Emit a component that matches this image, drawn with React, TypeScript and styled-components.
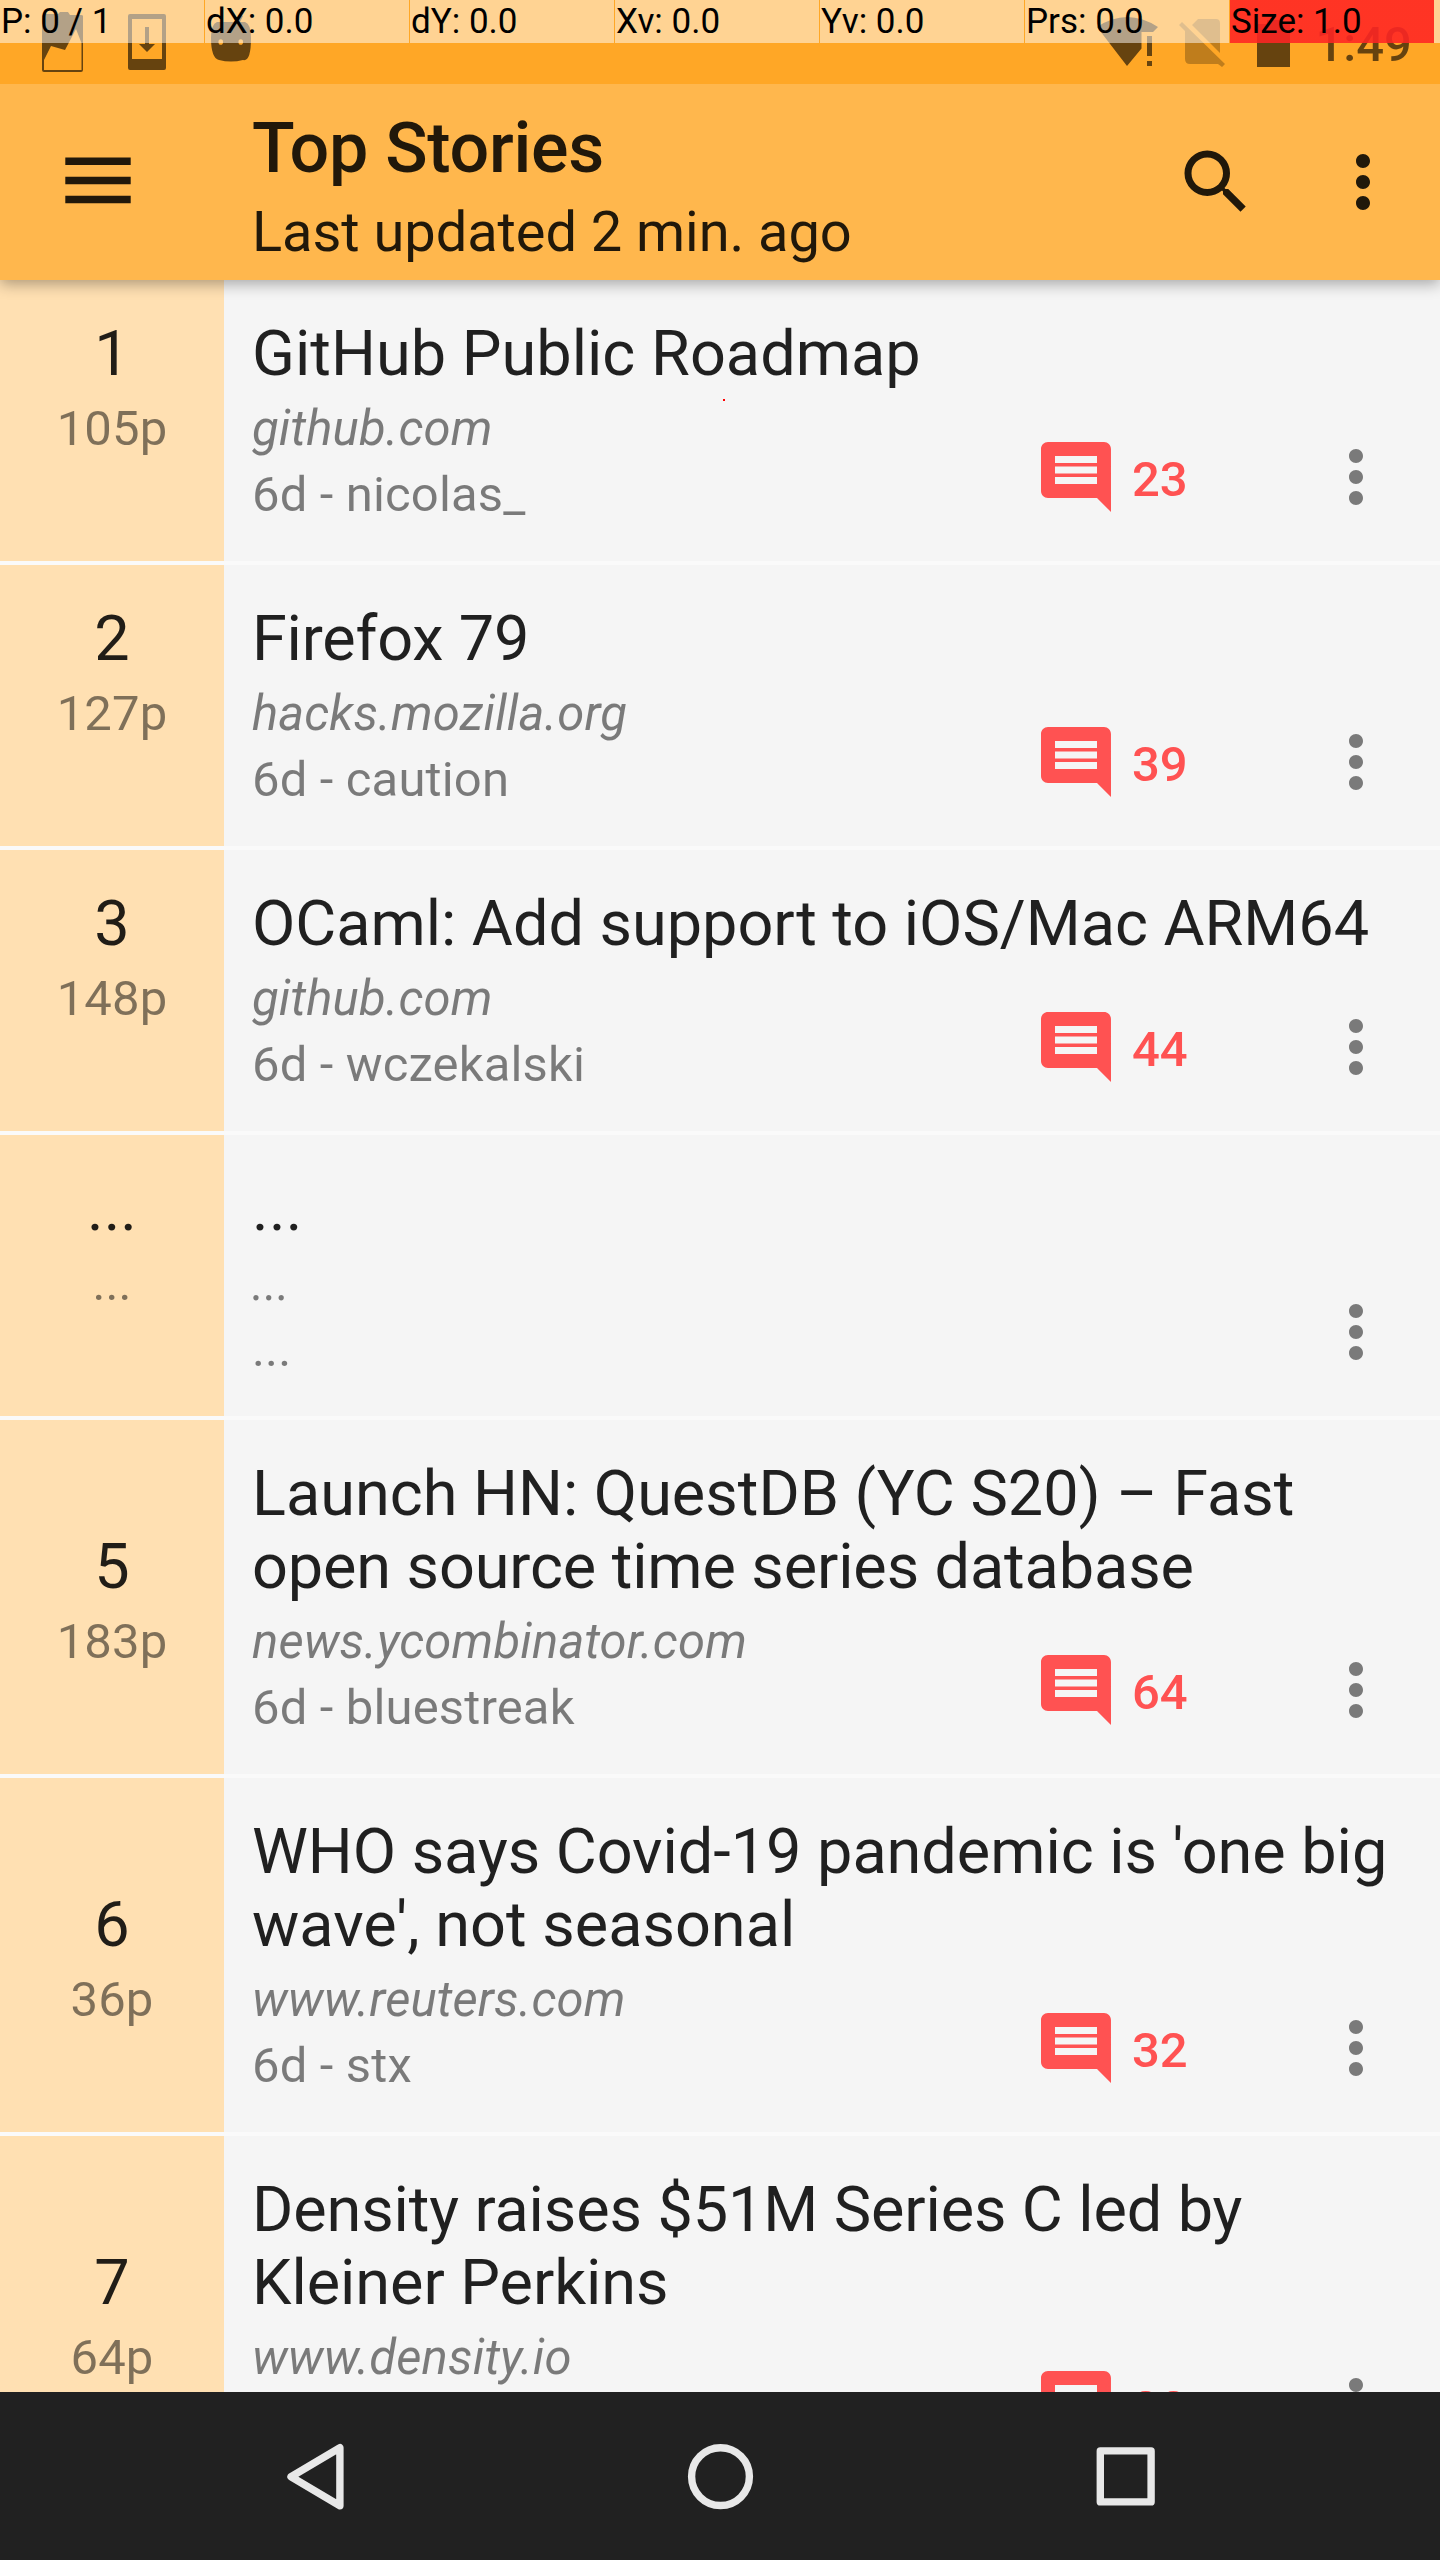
import React from 'react';
import styled, { createGlobalStyle } from 'styled-components';
import { MdComment, MdMoreVert, MdSearch } from 'react-icons/md';

const GlobalStyle = createGlobalStyle`
  body { margin: 0; background: #fafafa; }
  * { box-sizing: border-box; }
`;

const Screen = styled.div`
  position: relative;
  width: 1440px;
  height: 2560px;
  display: flex;
  flex-direction: column;
  overflow: hidden;
  font-family: Roboto, sans-serif;
  color: rgba(0, 0, 0, 0.87);
  background: #fafafa;
`;

const StatusBar = styled.div`
  flex: none;
  height: 84px;
  display: flex;
  justify-content: space-between;
  background: #ffa726;
`;

const Clock = styled.text`
  font: 500 49px Roboto, sans-serif;
`;

const Toolbar = styled.header`
  flex: none;
  height: 196px;
  display: flex;
  align-items: center;
  padding-right: 35px;
  background: #ffb74d;
  box-shadow: 0 4px 14px rgba(0, 0, 0, 0.32);
  clip-path: inset(0 0 -30px 0);
  z-index: 1;
`;

const MenuButton = styled.div`
  width: 252px;
  height: 196px;
`;

const Heading = styled.div`
  flex: 1;
  height: 196px;
  padding-top: 23px;
`;

const Title = styled.h1`
  margin: 0;
  font-size: 70px;
  font-weight: 500;
  line-height: 82px;
  letter-spacing: -0.28px;
`;

const Subtitle = styled.div`
  margin-top: 10px;
  font-size: 56px;
  line-height: 66px;
  letter-spacing: -0.06px;
`;

const Actions = styled.div`
  display: flex;
  gap: 63px;
`;

const List = styled.main`
  flex: 1;
  min-height: 0;
  overflow: hidden;
  display: flex;
  flex-direction: column;
  gap: 4px;
`;

const Row = styled.article`
  flex: none;
  display: flex;
  background: #f5f5f5;
`;

const Rank = styled.div`
  width: 224px;
  display: flex;
  flex-direction: column;
  justify-content: flex-end;
  align-items: center;
  padding-bottom: 104px;
  background: #ffe0b2;
`;

const Large = styled.div`
  font-size: 63px;
  line-height: 73px;
`;

const Small = styled.div<{ $italic?: boolean; $gap: number }>`
  margin-top: ${(p) => p.$gap}px;
  font-size: 49px;
  line-height: 57px;
  letter-spacing: 0.15px;
  font-style: ${(p) => (p.$italic ? 'italic' : 'normal')};
  color: rgba(0, 0, 0, 0.5);
`;

const Body = styled.div`
  flex: 1;
  display: grid;
  grid-template-columns: 782px 280px 84px;
  padding: 37px 0 38px 28px;
`;

const Headline = styled(Large)`
  grid-column: 1 / -1;
`;

const HeadlineLine = styled.div<{ $tracking: number }>`
  white-space: nowrap;
  letter-spacing: ${(p) => p.$tracking}px;
`;

const Meta = styled.div`
  height: 133px;
`;

const Comments = styled.div`
  display: flex;
  align-items: center;
  gap: 14px;
  height: 84px;
  margin-top: 45px;
  color: #ff5252;
`;

const CommentCount = styled.span`
  padding-top: 5px;
  font-size: 49px;
  font-weight: 500;
  line-height: 57px;
`;

const More = styled.div`
  height: 84px;
  margin-top: 45px;
  color: rgba(0, 0, 0, 0.5);
`;

const NavBar = styled.nav`
  flex: none;
  height: 168px;
  display: flex;
  justify-content: center;
  background: #212121;
`;

const PointerOverlay = styled.div`
  position: absolute;
  top: 0;
  left: 0;
  z-index: 2;
  width: 1440px;
  height: 43px;
  display: flex;
  gap: 1px;
  color: #000;
`;

const PointerCell = styled.div<{ $last?: boolean }>`
  width: ${(p) => (p.$last ? 210 : 204)}px;
  padding-left: 1px;
  background-color: rgba(255, 255, 255, 0.5);
  background-image: ${(p) =>
    p.$last
      ? 'linear-gradient(to right, rgba(255,0,0,.753) 204px, transparent 204px)'
      : 'none'};
  font-size: 35px;
  line-height: 43px;
  white-space: nowrap;
`;

const PointerMark = styled.div`
  position: absolute;
  top: 399px;
  left: 723px;
  z-index: 2;
  width: 2px;
  height: 2px;
  background: #f00;
`;

type Line = { text: string; tracking?: number };

type Story = {
  rank: string;
  points: string;
  title: Line[];
  site: string;
  by?: string;
  comments?: number;
};

const stories: Story[] = [
  { rank: '1', points: '105p', title: [{ text: 'GitHub Public Roadmap', tracking: 0.03 }], site: 'github.com', by: '6d - nicolas_', comments: 23 },
  { rank: '2', points: '127p', title: [{ text: 'Firefox 79', tracking: -0.2 }], site: 'hacks.mozilla.org', by: '6d - caution', comments: 39 },
  { rank: '3', points: '148p', title: [{ text: 'OCaml: Add support to iOS/Mac ARM64', tracking: -0.03 }], site: 'github.com', by: '6d - wczekalski', comments: 44 },
  { rank: '...', points: '...', title: [{ text: '...', tracking: 0.3 }], site: '...', by: '...' },
  {
    rank: '5',
    points: '183p',
    title: [{ text: 'Launch HN: QuestDB (YC S20) – Fast' }, { text: 'open source time series database', tracking: -0.12 }],
    site: 'news.ycombinator.com',
    by: '6d - bluestreak',
    comments: 64,
  },
  {
    rank: '6',
    points: '36p',
    title: [{ text: "WHO says Covid-19 pandemic is 'one big", tracking: -0.04 }, { text: "wave', not seasonal" }],
    site: 'www.reuters.com',
    by: '6d - stx',
    comments: 32,
  },
  {
    rank: '7',
    points: '64p',
    title: [{ text: 'Density raises $51M Series C led by', tracking: -0.12 }, { text: 'Kleiner Perkins', tracking: -0.06 }],
    site: 'www.density.io',
    comments: 22,
  },
];

const pointerReadings = ['P: 0 / 1', 'dX: 0.0', 'dY: 0.0', 'Xv: 0.0', 'Yv: 0.0', 'Prs: 0.0', 'Size: 1.0'];

const NotificationIcons = () => (
  <svg width="280" height="84" viewBox="0 0 280 84" fill="#000" fillOpacity="0.6">
    <path fillRule="evenodd" d="M44 14Q42 14 42 16V70Q42 72 44 72H81Q83 72 83 70V16Q83 15 81 15H70L68 12H60L58 14ZM44 60L51 46L65 50L76 29L81.500 43V70H44Z" />
    <path fillRule="evenodd" d="M130 14H164Q166 14 166 16V68Q166 70 164 70H130Q128 70 128 68V16Q128 14 130 14ZM132 19V59H162V19ZM145 27H149V44H155L147 52L139 44H145Z" />
    <path fillRule="evenodd" d="M217 22H237L241 15L243 16L240 22H245Q251 24 251 38Q251 62 243 60Q231 63 219 60Q211 58 211 38Q211 24 217 22ZM223 42A2.300 2.300 0 1 0 218.500 42A2.300 2.300 0 1 0 223 42ZM243 42A2.300 2.300 0 1 0 238.500 42A2.300 2.300 0 1 0 243 42Z" />
  </svg>
);

const SystemIcons = () => (
  <svg width="360" height="84" viewBox="1080 0 360 84" fill="#000" fillOpacity="0.6">
    <path d="M1097 27Q1127 7 1158 27L1153 32H1141.500V48.500L1127 66Z" />
    <path d="M1147 36H1152V56H1147ZM1147 61H1152V66H1147Z" />
    <path fillOpacity="0.25" d="M1198 19H1216Q1220 19 1220 23V53L1192 25ZM1179 25L1182 22L1225 64L1222 67L1218 64H1190Q1185 64 1185 59V31Z" />
    <path d="M1257 24H1267V20H1280V24H1290V67H1257Z" />
    <Clock x="1315.5" y="61">1:49</Clock>
  </svg>
);

const Hamburger = () => (
  <svg width="252" height="196" viewBox="0 84 252 196" fill="rgba(0,0,0,.87)">
    <path d="M65.300 157.600H130.700V165H65.300ZM65.300 176.800H130.700V184.200H65.300ZM65.300 195.800H130.700V203.200H65.300Z" />
  </svg>
);

const NavIcons = () => (
  <svg width="960" height="168" viewBox="240 2392 960 168" fill="none" stroke="#e8e8e8" strokeWidth="7.4" strokeLinejoin="round">
    <path d="M339.900 2447.700V2505.700L291 2476.700Z" />
    <circle cx="720.500" cy="2476.600" r="28.900" />
    <rect x="1100.300" y="2450.900" width="50.800" height="51" />
  </svg>
);

const StoryRow = ({ story }: { story: Story }) => (
  <Row>
    <Rank>
      <Large>{story.rank}</Large>
      <Small $gap={10}>{story.points}</Small>
    </Rank>
    <Body>
      <Headline>
        {story.title.map((line) => (
          <HeadlineLine key={line.text} $tracking={line.tracking ?? 0}>
            {line.text}
          </HeadlineLine>
        ))}
      </Headline>
      <Meta>
        <Small $italic $gap={10}>{story.site}</Small>
        {story.by && <Small $gap={9}>{story.by}</Small>}
      </Meta>
      <Comments>
        {story.comments !== undefined && (
          <>
            <MdComment size={84} />
            <CommentCount>{story.comments}</CommentCount>
          </>
        )}
      </Comments>
      <More>
        <MdMoreVert size={84} />
      </More>
    </Body>
  </Row>
);

export default function App() {
  return (
    <>
      <GlobalStyle />
      <Screen>
        <StatusBar>
          <NotificationIcons />
          <SystemIcons />
        </StatusBar>
        <Toolbar>
          <MenuButton>
            <Hamburger />
          </MenuButton>
          <Heading>
            <Title>Top Stories</Title>
            <Subtitle>Last updated 2 min. ago</Subtitle>
          </Heading>
          <Actions>
            <MdSearch size={84} />
            <MdMoreVert size={84} />
          </Actions>
        </Toolbar>
        <List>
          {stories.map((story) => (
            <StoryRow key={story.rank} story={story} />
          ))}
        </List>
        <NavBar>
          <NavIcons />
        </NavBar>
        <PointerOverlay>
          {pointerReadings.map((reading, i) => (
            <PointerCell key={reading} $last={i === 6}>
              {reading}
            </PointerCell>
          ))}
        </PointerOverlay>
        <PointerMark />
      </Screen>
    </>
  );
}
